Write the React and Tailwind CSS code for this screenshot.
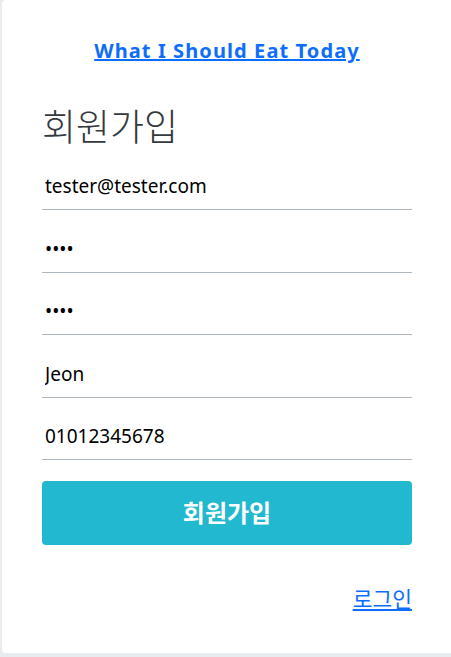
import React, { useState } from "react";

const font = { fontFamily: '"Noto Sans", "Noto Sans CJK KR", sans-serif' };

const Field = ({ type, value, onChange }) => (
  <input
    type={type}
    value={value}
    onChange={onChange}
    className="block w-full h-[47px] border-b border-[#adb5bd] px-[3px] text-[19px] text-black outline-none bg-transparent mt-[15.5px] first:mt-0"
  />
);

const App = () => {
  const [email, setEmail] = useState("tester@tester.com");
  const [password, setPassword] = useState("1234");
  const [passwordCheck, setPasswordCheck] = useState("1234");
  const [name, setName] = useState("Jeon");
  const [phone, setPhone] = useState("01012345678");

  return (
    <div
      className="h-[657px] overflow-hidden bg-[#e9ecef] pl-[2px]"
      style={font}
    >
      <div className="w-[470px] h-[653px] bg-white rounded-[4px] pl-[40px] pt-[36px]">
        <div className="w-[370px]">
          <div className="text-center">
            <a
              href="#"
              className="text-[20px] font-bold text-[#0d6efd] underline tracking-[1.1px]"
            >
              What I Should Eat Today
            </a>
          </div>

          <h1 className="mt-[37px] h-[60px] text-[37px] font-light leading-[48px] text-[#343a40]">
            회원가입
          </h1>

          <form onSubmit={(e) => e.preventDefault()}>
            <Field type="email" value={email} onChange={(e) => setEmail(e.target.value)} />
            <Field type="password" value={password} onChange={(e) => setPassword(e.target.value)} />
            <Field type="password" value={passwordCheck} onChange={(e) => setPasswordCheck(e.target.value)} />
            <Field type="text" value={name} onChange={(e) => setName(e.target.value)} />
            <Field type="text" value={phone} onChange={(e) => setPhone(e.target.value)} />

            <button
              type="submit"
              className="mt-[21px] w-full h-[64px] rounded-[4px] bg-[#22b8cf] text-white text-[24px] font-bold"
            >
              회원가입
            </button>
          </form>

          <div className="mt-[38px] text-right">
            <a href="#" className="text-[21.5px] text-[#0d6efd] underline">
              로그인
            </a>
          </div>
        </div>
      </div>
    </div>
  );
};

export default App;
